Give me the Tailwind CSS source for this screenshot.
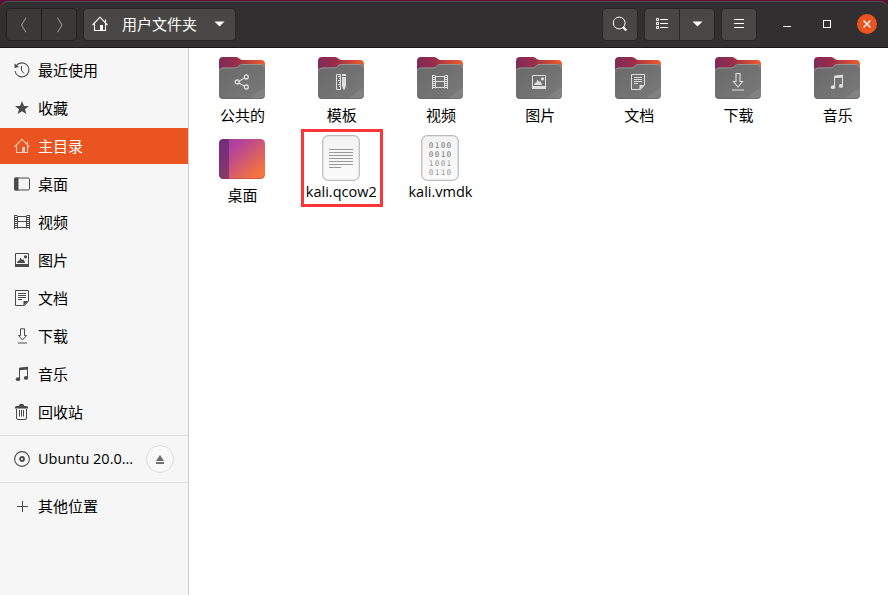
<!DOCTYPE html>
<html lang="zh-CN">
<head>
<meta charset="utf-8">
<title>用户文件夹</title>
<script src="https://cdn.jsdelivr.net/npm/@tailwindcss/browser@4"></script>
</head>
<body class="w-[888px] h-[595px] overflow-hidden bg-[#5c0f33] font-['Open_Sans','Noto_Sans_CJK_SC',sans-serif] text-[15px] leading-5 text-black">

<!-- kept rendered at zero size: gradients do not paint from a display:none svg -->
<svg class="absolute h-0 w-0">
    <defs>
        <linearGradient id="back" x1="0" y1="0" x2="1" y2="0">
            <stop offset="0" stop-color="#7f2a58"/>
            <stop offset=".4" stop-color="#9a2d4a"/>
            <stop offset=".7" stop-color="#c94835"/>
            <stop offset="1" stop-color="#ee5e2a"/>
        </linearGradient>
        <linearGradient id="front" x1="0" y1="0" x2="1" y2="1">
            <stop offset="0" stop-color="#696969"/>
            <stop offset=".82" stop-color="#777777"/>
            <stop offset=".83" stop-color="#808080"/>
            <stop offset="1" stop-color="#858585"/>
        </linearGradient>
        <linearGradient id="desk" x1="0" y1="0" x2="1" y2="1">
            <stop offset="0" stop-color="#a83ba0"/>
            <stop offset=".28" stop-color="#b3449a"/>
            <stop offset=".8" stop-color="#ee6e48"/>
            <stop offset="1" stop-color="#fb7a37"/>
        </linearGradient>
        <linearGradient id="paper" x1="0" y1="0" x2="0" y2="1">
            <stop offset="0" stop-color="#f3f3f3"/>
            <stop offset="1" stop-color="#fafafa"/>
        </linearGradient>
    </defs>

    <symbol id="folder" viewBox="0 0 46 42">
        <path d="M4 0H17Q19 0 20.300 1.600Q21.500 3 23.500 3H42Q46 3 46 7V38H0V4Q0 0 4 0Z" fill="url(#back)"/>
        <path d="M4 10.500H16Q18 10.500 19.300 9L20 8.300Q21.200 7 23 7H42Q46 7 46 11V38Q46 42 42 42H4Q0 42 0 38V14.500Q0 10.500 4 10.500Z" fill="url(#front)"/>
        <path d="M.5 14Q.5 11 4 11H16.200Q18.300 11 19.600 9.500L20.300 8.700Q21.500 7.500 23 7.500H42Q45.500 7.500 45.500 11" fill="none" stroke="#929292"/>
        <path d="M.5 38Q.5 41.500 4 41.500H42Q45.500 41.500 45.500 38" fill="none" stroke="#5e5e5e" stroke-opacity=".5"/>
    </symbol>
    <symbol id="recent" viewBox="0 0 16 16">
        <path d="M2.300 3.700A7 7 0 1 1 1 9" fill="none" stroke="currentColor" stroke-width="1.100"/>
        <path d="M.5 1.500V6L5 5Z" fill="currentColor"/>
        <path d="M7.500 4V8.500L10 11.500" fill="none" stroke="currentColor"/>
    </symbol>
    <symbol id="star" viewBox="0 0 16 16">
        <path d="M8 1L10 6H15L11 9.300L12.400 14L8 11.200L3.600 14L5 9.300L1 6H6Z" fill="currentColor"/>
    </symbol>
    <symbol id="home" viewBox="0 0 16 16">
        <path d="M.5 9L8 1.200L15.500 9M2.500 7.500V14.500H13.500V7.500M13.500 6V3.500" fill="none" stroke="currentColor" stroke-width="1.100"/>
        <path d="M8 9H11V15H8Z" fill="currentColor"/>
    </symbol>
    <symbol id="desktop" viewBox="0 0 16 16">
        <rect x=".5" y="2" width="15" height="12" rx="1.500" fill="none" stroke="currentColor"/>
        <path d="M1.500 1.500H4.500V14.500H1.500Q0 14.500 0 13V3Q0 1.500 1.500 1.500Z" fill="currentColor"/>
    </symbol>
    <symbol id="video" viewBox="0 0 16 16">
        <path d="M3.500 1.500V14.500M12.500 1.500V14.500M3.500 2.500H12.500M3.500 7.500H12.500M3.500 13.500H12.500" fill="none" stroke="currentColor"/>
        <path d="M.5 1V15M15.500 1V15" fill="none" stroke="currentColor"/>
        <path d="M2 1V15M14 1V15" fill="none" stroke="currentColor" stroke-width="2" stroke-dasharray="1 1"/>
    </symbol>
    <symbol id="picture" viewBox="0 0 16 16">
        <path d="M1.500 1.500H14.500V14.500H1.500Z" fill="none" stroke="currentColor"/>
        <path d="M1 12H15V15H1ZM3 11L4 8.500L5 9L6.500 5.500L8 8L9 7L10.500 9L11 11Z" fill="currentColor"/>
        <circle cx="11.500" cy="4.800" r="1.600" fill="currentColor"/>
    </symbol>
    <symbol id="document" viewBox="0 0 16 16">
        <path d="M1.500 .5H14.500V11L10.500 15.500H1.500ZM4 3.500H12M4 5.500H12M4 7.500H12M4 9.500H8" fill="none" stroke="currentColor"/>
        <path d="M9.500 15.500V11H14.500Z" fill="currentColor"/>
    </symbol>
    <symbol id="download" viewBox="0 0 16 16">
        <path d="M6.500 .8H10.500V7.500H12.500L8.500 12L4.500 7.500H6.500ZM4 15H13" fill="none" stroke="currentColor"/>
    </symbol>
    <!-- the folder emblem has a wider base line than the sidebar icon -->
    <symbol id="download-wide" viewBox="0 0 16 18">
        <path d="M6 .5H10V8.500H12.500L8 14L3.500 8.500H6ZM2 17H14" fill="none" stroke="currentColor" stroke-width="1.100"/>
    </symbol>
    <symbol id="music" viewBox="0 0 16 16">
        <path d="M5.500 13V2.500L13.500 1.500V11.500" fill="none" stroke="currentColor"/>
        <path d="M5 1.800L14 .7V3.400L5 4.300Z" fill="currentColor"/>
        <ellipse cx="4" cy="13.200" rx="2.200" ry="1.900" fill="currentColor"/>
        <ellipse cx="12" cy="11.900" rx="2.200" ry="1.900" fill="currentColor"/>
    </symbol>
    <symbol id="trash" viewBox="0 0 16 16">
        <path d="M2.500 5V14Q2.500 15.500 4 15.500H11Q12.500 15.500 12.500 14V5M5.500 6V12.500M7.500 6V12.500M9.500 6V12.500" fill="none" stroke="currentColor"/>
        <path d="M1 4.500V3.500Q1 2 2.500 2H5V1L6 0H9L10 1V2H12.500Q14 2 14 3.500V4.500Z" fill="currentColor"/>
    </symbol>
    <symbol id="disc" viewBox="0 0 16 16">
        <circle cx="8" cy="8" r="7.400" fill="none" stroke="currentColor" stroke-width="1.100"/>
        <circle cx="8" cy="8" r="2" fill="none" stroke="currentColor" stroke-width="1.800"/>
    </symbol>
    <symbol id="share" viewBox="0 0 16 16">
        <path d="M5 7.200L10 4.200M5 9L10 12" fill="none" stroke="currentColor" stroke-width="1.100"/>
        <g fill="none" stroke="currentColor" stroke-width="1.300">
            <circle cx="3.200" cy="8" r="2"/><circle cx="12.300" cy="3" r="2"/><circle cx="12.300" cy="13" r="2"/>
        </g>
    </symbol>
    <symbol id="template" viewBox="0 0 16 16">
        <path d="M3.500 .5H7.500V15.500H3.500ZM5 2.500H8M6 4.500H8M5 6.500H8M6 8.500H8M5 10.500H8M6 12.500H8" fill="none" stroke="currentColor"/>
        <path d="M9 0H13V2H9ZM9 3H13V12L11.700 15.500H10.300L9 12Z" fill="currentColor"/>
    </symbol>
</svg>

<div class="mt-px flex h-[47px] items-start rounded-t-lg border-t border-b border-t-[#514e4b] border-b-[#1c151a] bg-[#322f30] pt-[6px] pl-[6px] text-white">
    <div class="flex h-[33px] w-[71px] rounded border border-[#242122] bg-[#3b3938] text-[#8c8a88]">
        <div class="flex w-[35px] items-center justify-center border-r border-[#201d1e]">
            <svg class="size-4" viewBox="0 0 16 16"><path d="M10 .8L5.500 8L10 15.200" fill="none" stroke="currentColor" stroke-width="1.200"/></svg>
        </div>
        <div class="flex flex-1 items-center justify-center">
            <svg class="size-4" viewBox="0 0 16 16"><path d="M6.500 .8L11 8L6.500 15.200" fill="none" stroke="currentColor" stroke-width="1.200"/></svg>
        </div>
    </div>
    <div class="ml-[6px] flex h-[33px] w-[153px] items-center rounded border border-[#282526] bg-[#494745] pb-px pl-2">
        <svg class="size-4"><use href="#home"/></svg>
        <span class="ml-[14px]">用户文件夹</span>
        <svg class="ml-[17px] h-[6px] w-[11px]" viewBox="0 0 11 6"><path d="M.5 .5H10.500L5.500 5.500Z" fill="#fff"/></svg>
    </div>
    <div class="ml-auto flex h-[33px] w-[36px] items-center justify-center rounded border border-[#282526] bg-[#494745] pb-px">
        <svg class="size-4" viewBox="0 0 16 16"><circle cx="7.200" cy="7" r="5.900" fill="none" stroke="#fff"/><path d="M11 11L14.300 14.500" stroke="#fff" stroke-width="2"/></svg>
    </div>
    <div class="ml-[6px] flex h-[33px] w-[71px] rounded border border-[#282526] bg-[#494745] pb-px">
        <div class="-mb-px flex w-[35px] items-center justify-center border-r border-[#282526] pb-px">
            <svg class="h-3 w-[13px]" viewBox="0 0 13 12" fill="none" stroke="#fff"><path d="M.5 .5H2.500V2.500H.5ZM.5 4.500H2.500V6.500H.5ZM.5 8.500H2.500V10.500H.5ZM4 1.500H12M4 5.500H12M4 9.500H12"/></svg>
        </div>
        <div class="flex flex-1 items-center justify-center">
            <svg class="h-[6px] w-[11px]" viewBox="0 0 11 6"><path d="M.5 .5H10.500L5.500 5.500Z" fill="#fff"/></svg>
        </div>
    </div>
    <div class="ml-[6px] flex h-[33px] w-[36px] items-center justify-center rounded border border-[#282526] bg-[#494745] pb-[2px]">
        <svg class="h-[9px] w-[10px]" viewBox="0 0 10 9" stroke="#fff"><path d="M0 .5H10M0 4.500H10M0 8.500H10"/></svg>
    </div>
    <div class="mt-[18px] ml-[26px] h-px w-2 bg-white"></div>
    <div class="mt-[12px] ml-8 size-2 border border-white"></div>
    <div class="mt-[6px] mr-[11px] ml-[26px] flex size-5 items-center justify-center rounded-full bg-[#e95420]">
        <svg class="size-2" viewBox="0 0 8 8"><path d="M.5 .5L7.500 7.500M7.500 .5L.5 7.500" stroke="#fff" stroke-width="1.400"/></svg>
    </div>
</div>

<div class="flex h-[547px]">
    <div class="w-[189px] shrink-0 border-r border-[#cdcdcd] bg-[#f6f6f6] pt-1">
        <div id="places" class="flex flex-col gap-0.5"></div>
        <div class="mt-[5px] border-t border-[#dcdcdc]"></div>
        <div class="flex h-[46px] items-center pl-[14px]">
            <svg class="size-4 text-[#4a4a4a]"><use href="#disc"/></svg>
            <span class="ml-2 w-[96px] text-[14.5px] whitespace-nowrap">Ubuntu 20.0…</span>
            <div class="ml-3 flex size-7 items-center justify-center rounded-full border border-[#dcdcdc] bg-[#f8f8f8]">
                <svg class="h-[9px] w-2" viewBox="0 0 8 9"><path d="M4 0L8 6H0ZM0 7H8V9H0Z" fill="#6f6f6f"/></svg>
            </div>
        </div>
        <div class="border-t border-[#dcdcdc]"></div>
        <div class="mt-[5px] flex h-9 items-center pl-[14px]">
            <svg class="size-4" viewBox="0 0 16 16"><path d="M8.500 3V14M3 8.500H14" stroke="#4a4a4a"/></svg>
            <span class="ml-2">其他位置</span>
        </div>
    </div>

    <div class="flex-1 bg-white pt-[9px] pl-[3px]">
        <div id="folders" class="grid h-[78px] grid-cols-[repeat(7,99.2px)]"></div>
        <div class="grid grid-cols-[repeat(3,99.2px)]">
            <div class="flex flex-col items-center pt-1">
                <svg class="h-[40px] w-[46px]" viewBox="0 0 46 40">
                    <rect width="46" height="40" rx="4.500" fill="url(#desk)"/>
                    <path d="M10 0H4.500Q0 0 0 4.500V35.500Q0 40 4.500 40H10Z" fill="#3f1b5a" fill-opacity=".5"/>
                    <path d="M.5 36Q1 39.500 4.500 39.500H41.500Q45 39.500 45.500 36" fill="none" stroke="#602030" stroke-opacity=".25"/>
                </svg>
                <span class="mt-[6px] pl-[2px]">桌面</span>
            </div>
            <div class="flex justify-center">
                <div class="-mt-[6px] -mr-[2px] flex h-[78px] w-[82px] shrink-0 flex-col items-center border-3 border-[#fb3538] pt-[3px] pr-[2px]">
                    <svg class="h-[46px] w-[38px] shrink-0" viewBox="0 0 38 46">
                        <rect x=".7" y=".7" width="36.600" height="44.600" rx="5.500" fill="url(#paper)" stroke="#bbb" stroke-width="1.200"/>
                        <path d="M7 14.500H31M7 17.500H31M7 20.500H31M7 23.500H31M7 26.500H31M7 29.500H31M7 32.500H19" stroke="#999"/>
                    </svg>
                    <span class="mt-px pl-px text-[14.500px] whitespace-nowrap">kali.qcow2</span>
                </div>
            </div>
            <div class="flex flex-col items-center">
                <svg class="h-[46px] w-[38px]" viewBox="0 0 38 46">
                    <rect x=".7" y=".7" width="36.600" height="44.600" rx="5.500" fill="url(#paper)" stroke="#bbb" stroke-width="1.200"/>
                    <g class="font-['DejaVu_Sans_Mono',monospace] text-[7.7px] tracking-[1.3px]" text-anchor="middle">
                        <text x="19.700" y="13" fill="#777">0100</text>
                        <text x="19.700" y="22" fill="#777">0010</text>
                        <text x="19.700" y="31" fill="#999">1001</text>
                        <text x="19.700" y="40" fill="#999">0110</text>
                    </g>
                </svg>
                <span class="mt-px pl-px text-[14.5px]">kali.vmdk</span>
            </div>
        </div>
    </div>
</div>

<script>
const places = [
    ['recent', '最近使用'],
    ['star', '收藏'],
    ['home', '主目录'],
    ['desktop', '桌面'],
    ['video', '视频'],
    ['picture', '图片'],
    ['document', '文档'],
    ['download', '下载'],
    ['music', '音乐'],
    ['trash', '回收站']
]
const folders = [
    ['share', '公共的'],
    ['template', '模板'],
    ['video', '视频'],
    ['picture', '图片'],
    ['document', '文档'],
    ['download-wide', '下载'],
    ['music', '音乐']
]

document.getElementById('places').innerHTML = places.map(([icon, name]) => {
    const active = icon === 'home'
    return `<div class="flex h-9 items-center pl-[14px] ${active ? 'bg-[#e95420] text-white' : ''}">
        <svg class="size-4 ${active ? 'text-[#f9c9b5]' : 'text-[#4a4a4a]'}"><use href="#${icon}"/></svg>
        <span class="ml-2">${name}</span>
    </div>`
}).join('')

document.getElementById('folders').innerHTML = folders.map(([icon, name]) => `
    <div class="flex flex-col items-center">
        <div class="relative">
            <svg class="h-[42px] w-[46px]"><use href="#folder"/></svg>
            <svg class="absolute left-[15px] text-[#dedede] ${icon === 'download-wide' ? 'top-4 h-[18px] w-4' : 'top-[17px] size-4'}"><use href="#${icon}"/></svg>
        </div>
        <span class="mt-[6px] pl-[2px]">${name}</span>
    </div>`).join('')
</script>
</body>
</html>
